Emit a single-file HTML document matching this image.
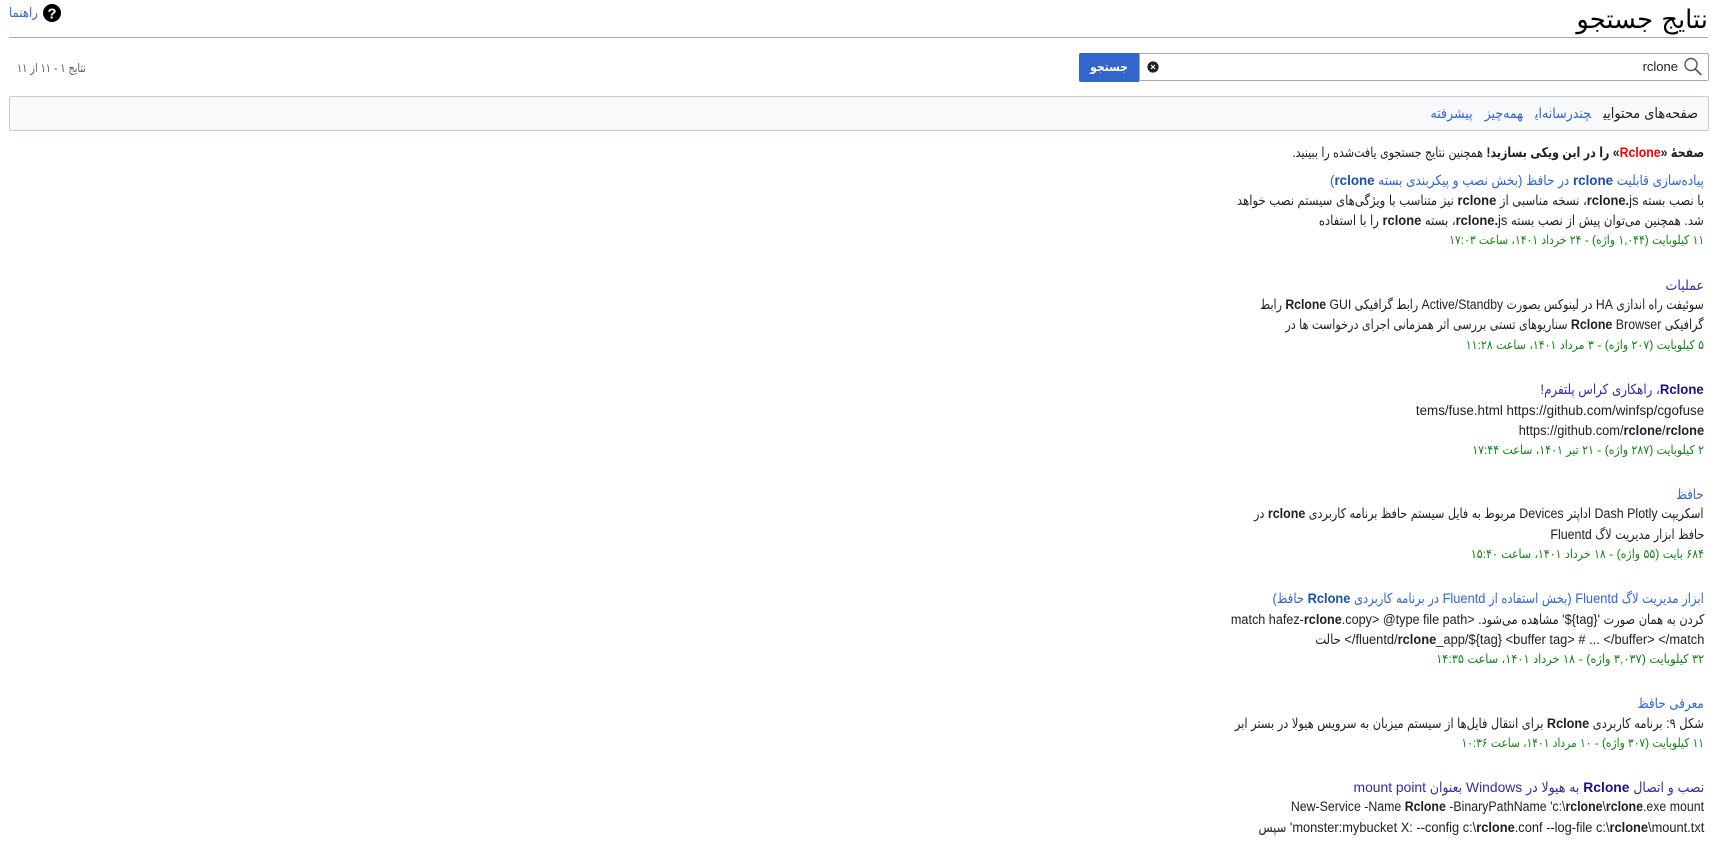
<!DOCTYPE html>
<html lang="fa" dir="rtl">
<head>
<meta charset="utf-8">
<title>نتایج جستجو</title>
<style>
html,body{margin:0;padding:0;background:#fff;width:1719px;height:841px;overflow:hidden}
body{position:relative;font-family:"Liberation Sans","DejaVu Sans Condensed","DejaVu Sans",sans-serif;font-size:13.5px;color:#202122}
a{color:#3366cc;text-decoration:none}
.l{position:absolute;right:15px;white-space:nowrap;line-height:20px;height:20px;direction:rtl;transform-origin:right center}
.t{font-size:14px;color:#3366cc}
.t.vis{color:#3a2a9a}
.t.vis b{color:#1f0f80}
.m{color:#148014;font-size:12.2px}
b{font-weight:bold;color:#202122}
.t b{color:#1c4fa8}
bdo{unicode-bidi:isolate}
</style>
</head>
<body>
<div style="position:absolute;right:11px;top:5px;font-family:'DejaVu Sans',sans-serif;font-size:25.8px;line-height:30px;color:#000;white-space:nowrap">نتایج جستجو</div>
<div style="position:absolute;left:9px;top:37px;width:1699px;height:1px;background:#a2a9b1"></div>

<svg style="position:absolute;left:43px;top:4px" width="18" height="18" viewBox="0 0 18 18"><circle cx="9" cy="9" r="9" fill="#000"/><text x="9" y="14.3" font-family="Liberation Sans" font-weight="bold" font-size="15" fill="#fff" text-anchor="middle">?</text></svg>
<a style="position:absolute;left:9px;top:3px;font-size:13px;line-height:20px;white-space:nowrap">راهنما</a>

<div style="position:absolute;left:17px;top:58px;font-size:12px;line-height:20px;color:#54595d;white-space:nowrap;direction:rtl;transform:scaleX(.89);transform-origin:left center">نتایج ۱ - ۱۱ از ۱۱</div>

<div style="position:absolute;left:1139px;top:53px;width:568px;height:26px;border:1px solid #a2a9b1;border-radius:0 2px 2px 0;background:#fff"></div>
<div style="position:absolute;left:1079px;top:53px;width:60px;height:29px;background:#3366cc;border-radius:2px 0 0 2px;color:#fff;font-weight:bold;font-size:12px;line-height:29px;text-align:center">جستجو</div>
<svg style="position:absolute;left:1147px;top:61px" width="12" height="12" viewBox="0 0 12 12"><circle cx="6" cy="6" r="5.6" fill="#222"/><path d="M4 4l4 4M8 4l-4 4" stroke="#fff" stroke-width="1.2"/></svg>
<div style="position:absolute;left:1630px;top:57px;width:48px;text-align:right;direction:ltr;font-size:13px;line-height:20px;color:#202122">rclone</div>
<svg style="position:absolute;left:1683px;top:57px" width="20" height="19" viewBox="0 0 20 19"><circle cx="8" cy="7.5" r="6" fill="none" stroke="#54595d" stroke-width="1.4"/><path d="M12.3 12l6 6" stroke="#54595d" stroke-width="1.7"/></svg>

<div style="position:absolute;left:9px;top:96px;width:1698px;height:33px;border:1px solid #c8ccd1;background:#f8f9fa;border-radius:2px"></div>
<div class="l" style="right:21px;top:103px;font-size:14px"><span style="margin-left:12px;font-size:14.4px">صفحه‌های محتوایی</span><a style="margin-left:12px">چندرسانه‌ای</a><a style="margin-left:12px">همه‌چیز</a><a>پیشرفته</a></div>

<div class="l" style="top:143px;transform:scaleX(.911)"><b>صفحهٔ «<span style="color:#f00">Rclone</span>» را در این ویکی بسازید!</b> همچنین نتایج جستجوی یافت‌شده را ببینید.</div>

<div class="l t" style="top:170px;transform:scaleX(.954)"><a>پیاده‌سازی قابلیت <b>rclone</b> در حافظ</a> (<a>بخش نصب و پیکربندی بسته <b>rclone</b></a>)</div>
<div class="l" style="top:191px;transform:scaleX(.957)">با نصب بسته <b>rclone.</b>js، نسخه مناسبی از <b>rclone</b> نیز متناسب با ویژگی‌های سیستم نصب خواهد</div>
<div class="l" style="top:211px;transform:scaleX(.958)">شد. همچنین می‌توان پیش از نصب بسته <b>rclone.</b>js، بسته <b>rclone</b> را با استفاده</div>
<div class="l m" style="top:230px;transform:scaleX(.98)">۱۱ کیلوبایت (۱,۰۴۴ واژه) - ۲۴ خرداد ۱۴۰۱، ساعت ۱۷:۰۳</div>

<div class="l t vis" style="top:275px">عملیات</div>
<div class="l" style="top:295px;transform:scaleX(.906)">سوئیفت راه اندازی HA در لینوکس بصورت Active/Standby رابط گرافیکی <bdo dir="ltr"><b>Rclone</b> GUI</bdo> رابط</div>
<div class="l" style="top:315px;transform:scaleX(.92)">گرافیکی <bdo dir="ltr"><b>Rclone</b> Browser</bdo> سناریوهای تستی بررسی اثر همزمانی اجرای درخواست ها در</div>
<div class="l m" style="top:335px">۵ کیلوبایت (۲۰۷ واژه) - ۳ مرداد ۱۴۰۱، ساعت ۱۱:۲۸</div>

<div class="l t vis" style="top:379px;transform:scaleX(.94)"><b>Rclone</b>، راهکاری کراس پلتفرم!</div>
<div class="l" style="top:401px;transform:scaleX(.99)"><bdo dir="ltr">tems/fuse.html https://github.com/winfsp/cgofuse</bdo></div>
<div class="l" style="top:421px;transform:scaleX(.95)"><bdo dir="ltr">https://github.com/<b>rclone</b>/<b>rclone</b></bdo></div>
<div class="l m" style="top:440px">۲ کیلوبایت (۲۸۷ واژه) - ۲۱ تیر ۱۴۰۱، ساعت ۱۷:۴۴</div>

<div class="l t" style="top:484px;transform:scaleX(.93)">حافظ</div>
<div class="l" style="top:504px;transform:scaleX(.924)">اسکریپت Dash Plotly اداپتر Devices مربوط به فایل سیستم حافظ برنامه کاربردی <b>rclone</b> در</div>
<div class="l" style="top:525px;transform:scaleX(.92)">حافظ ابزار مدیریت لاگ Fluentd</div>
<div class="l m" style="top:544px">۶۸۴ بایت (۵۵ واژه) - ۱۸ خرداد ۱۴۰۱، ساعت ۱۵:۴۰</div>

<div class="l t" style="top:588px;transform:scaleX(.918)"><a>ابزار مدیریت لاگ Fluentd</a> (<a>بخش استفاده از Fluentd در برنامه کاربردی <b>Rclone</b> حافظ</a>)</div>
<div class="l" style="top:610px;transform:scaleX(.935)">کردن به همان صورت <bdo dir="ltr">'${tag}'</bdo> مشاهده می‌شود. <bdo dir="ltr">match hafez-<b>rclone</b>.copy&gt; @type file path&gt;</bdo></div>
<div class="l" style="top:630px;transform:scaleX(.953)"><bdo dir="ltr">&lt;/fluentd/<b>rclone</b>_app/${tag} &lt;buffer tag&gt; # ... &lt;/buffer&gt; &lt;/match</bdo> حالت</div>
<div class="l m" style="top:649px;transform:scaleX(1.03)">۳۲ کیلوبایت (۳,۰۳۷ واژه) - ۱۸ خرداد ۱۴۰۱، ساعت ۱۴:۳۵</div>

<div class="l t" style="top:693px;transform:scaleX(.95)">معرفی حافظ</div>
<div class="l" style="top:714px;transform:scaleX(.94)">شکل ۹: برنامه کاربردی <b>Rclone</b> برای انتقال فایل‌ها از سیستم میزبان به سرویس هیولا در بستر ابر</div>
<div class="l m" style="top:733px;transform:scaleX(.97)">۱۱ کیلوبایت (۳۰۷ واژه) - ۱۰ مرداد ۱۴۰۱، ساعت ۱۰:۳۶</div>

<div class="l t vis" style="top:777px;transform:scaleX(.99)">نصب و اتصال <b>Rclone</b> به هیولا در Windows بعنوان mount point</div>
<div class="l" style="top:797px;transform:scaleX(.914)"><bdo dir="ltr">New-Service -Name <b>Rclone</b> -BinaryPathName 'c:\<b>rclone</b>\<b>rclone</b>.exe mount</bdo></div>
<div class="l" style="top:818px;transform:scaleX(.95)"><bdo dir="ltr">'monster:mybucket X: --config c:\<b>rclone</b>.conf --log-file c:\<b>rclone</b>\mount.txt</bdo> <span>سپس</span></div>
</body>
</html>
